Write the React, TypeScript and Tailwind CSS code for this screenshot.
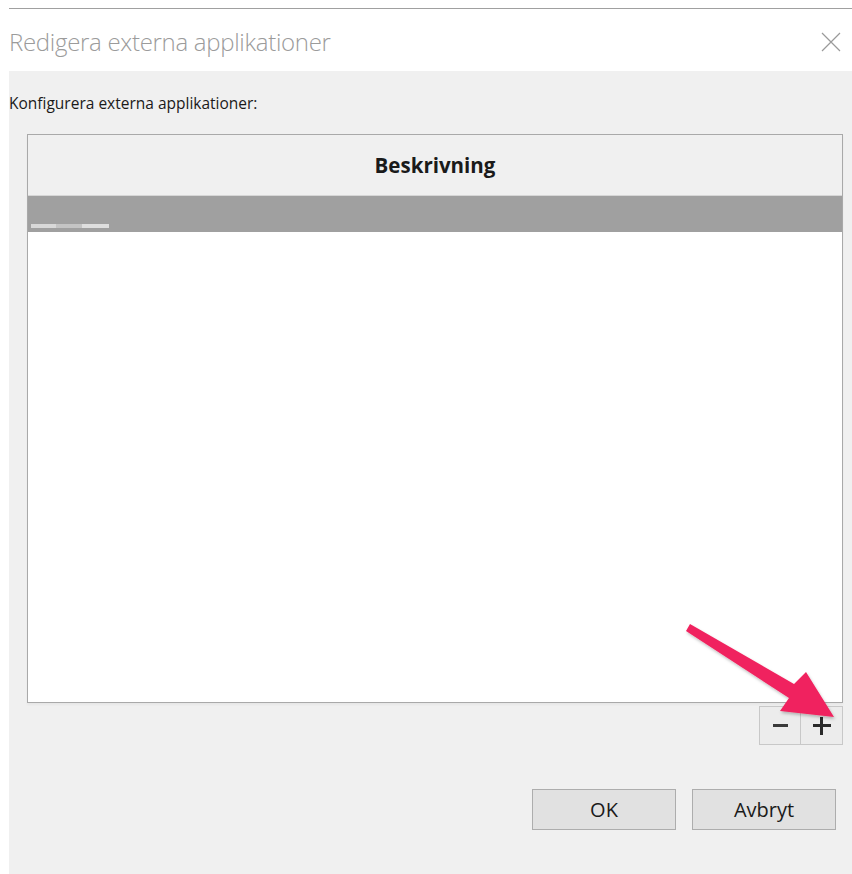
import React from 'react';

const font = { fontFamily: '"Open Sans", "Noto Sans", sans-serif' };

function CloseGlyph() {
  return (
    <svg width="20" height="20" viewBox="0 0 20 20" className="mt-[4px] text-[#9a9a9a]">
      <path d="M1 1 L19 19 M19 1 L1 19" stroke="currentColor" strokeWidth="1.2" fill="none" />
    </svg>
  );
}

// pink callout arrow pointing at the add button
function Pointer() {
  return (
    <svg
      className="pointer-events-none absolute left-0 top-0"
      width="852"
      height="874"
      viewBox="0 0 852 874"
    >
      <defs>
        <filter id="arrowShadow" x="-20%" y="-20%" width="140%" height="140%">
          <feDropShadow dx="1" dy="2" stdDeviation="1.5" floodColor="#000" floodOpacity="0.25" />
        </filter>
      </defs>
      <path
        d="M686 631 L690 624 L794 684 L806 672 L834 717 L780 711 L789 698 Z"
        fill="#f0245e"
        filter="url(#arrowShadow)"
      />
    </svg>
  );
}

export default function App() {
  return (
    <div className="relative w-[852px] h-[874px] bg-white pl-[9px] pt-[8px]" style={font}>
      <div className="flex h-full flex-col border-t border-[#a0a0a0]">
        {/* title bar */}
        <div className="flex h-[62px] items-center justify-between bg-white pr-[11px]">
          <span className="mt-[3px] text-[24px] font-light text-[#9b9b9b] tracking-[-0.3px]">
            Redigera externa applikationer
          </span>
          <CloseGlyph />
        </div>

        {/* dialog body */}
        <div className="flex flex-1 flex-col bg-[#f0f0f0] pl-[18px] pr-[9px]">
          <div className="-ml-[18px] pt-[20px] pb-[19px] text-[15.5px] leading-[24px] text-[#1a1a1a]">
            Konfigurera externa applikationer:
          </div>

          <div className="flex h-[569px] flex-col border border-[#a9a9a9] bg-white shadow-[0_2px_2px_rgba(0,0,0,0.04)]">
            <div className="flex h-[61px] items-center justify-center border-b border-[#d6d6d6] bg-[#f0f0f0] text-[20.5px] font-bold text-[#1a1a1a]">
              Beskrivning
            </div>
            <div className="flex h-[36px] items-end bg-[#a0a0a0] pb-[4px] pl-[3px]">
              <div className="flex h-[4px] w-[78px]">
                <div className="w-[25px] bg-[#d8d8d8]" />
                <div className="w-[26px] bg-[#c4c4c4]" />
                <div className="w-[27px] bg-[#dedede]" />
              </div>
            </div>
            <div className="flex-1 bg-white" />
          </div>

          <div className="flex justify-end pt-[3px]">
            <button className="flex h-[39px] w-[42px] items-center justify-center border border-[#c8c8c8] bg-[#ececec]">
              <span className="block h-[3px] w-[15px] bg-[#3a3a3a]" />
            </button>
            <button className="-ml-px flex h-[39px] w-[43px] items-center justify-center border border-[#c8c8c8] bg-[#ececec]">
              <span className="relative block h-[18px] w-[18px]">
                <span className="absolute left-0 top-[7.5px] h-[3px] w-[18px] bg-[#2a2a2a]" />
                <span className="absolute left-[7.5px] top-0 h-[18px] w-[3px] bg-[#2a2a2a]" />
              </span>
            </button>
          </div>

          <div className="flex justify-end gap-[16px] pr-[7px] pt-[44px]">
            <button className="h-[41px] w-[144px] border border-[#adadad] bg-[#e1e1e1] text-[20px] text-[#1a1a1a]">
              OK
            </button>
            <button className="h-[41px] w-[144px] border border-[#adadad] bg-[#e1e1e1] text-[20px] text-[#1a1a1a]">
              Avbryt
            </button>
          </div>
        </div>
      </div>
      <Pointer />
    </div>
  );
}
